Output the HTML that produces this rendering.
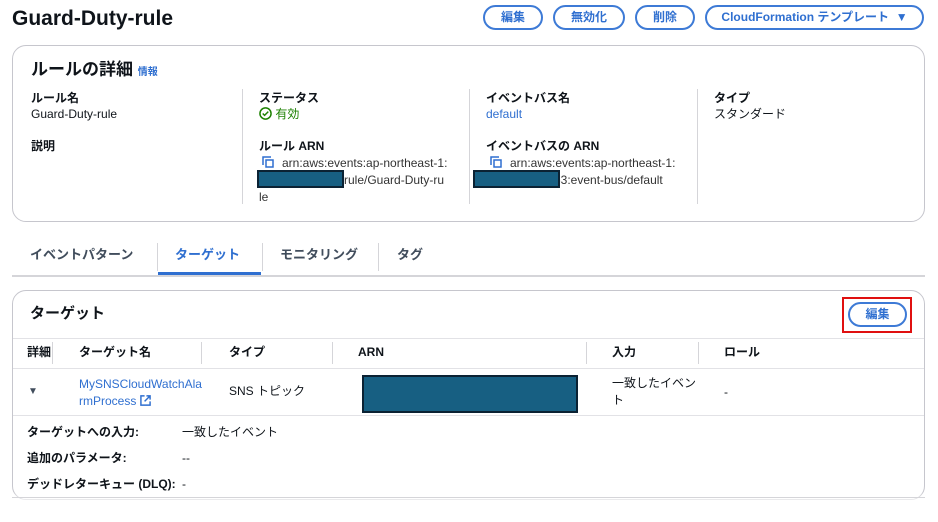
<!DOCTYPE html>
<html><head><meta charset="utf-8"><style>
*{box-sizing:border-box;margin:0;padding:0}
body{width:938px;height:522px;background:#fff;font-family:"Liberation Sans","Noto Sans CJK JP",sans-serif;color:#0f141a;position:relative;overflow:hidden;font-size:12px}
.a{position:absolute;white-space:nowrap;line-height:17px}
.b{font-weight:bold}
.btn{position:absolute;border:2px solid #3d7ad6;border-radius:14px;color:#2f6fd0;font-weight:bold;font-size:12px;text-align:center;line-height:21px;height:25px}
.card{position:absolute;border:1px solid #c6c6cd;border-radius:14px;background:#fff}
.vl{position:absolute;width:1px;background:#d5d5d9}
.hl{position:absolute;height:1px;background:#e2e2e6}
.blue{color:#2f6fd0}
.red{position:absolute;background:#175f82;border:2px solid #0b2233}
.cp{position:absolute;width:12px;height:12px}
</style></head><body>
<div class="a b" style="left:12px;top:6px;font-size:21px;line-height:26px">Guard-Duty-rule</div>
<div class="btn" style="left:483px;top:5px;width:60px">編集</div>
<div class="btn" style="left:553px;top:5px;width:72px">無効化</div>
<div class="btn" style="left:635px;top:5px;width:60px">削除</div>
<div class="btn" style="left:705px;top:5px;width:219px">CloudFormation テンプレート &nbsp;▼</div>

<div class="card" style="left:12px;top:45px;width:913px;height:177px"></div>
<div class="a b" style="left:31px;top:59px;font-size:17px;line-height:22px">ルールの詳細 <span class="blue" style="font-size:10px">情報</span></div>
<div class="vl" style="left:242px;top:89px;height:115px"></div>
<div class="vl" style="left:469px;top:89px;height:115px"></div>
<div class="vl" style="left:697px;top:89px;height:115px"></div>
<div class="a b" style="left:31px;top:90px">ルール名</div>
<div class="a" style="left:31px;top:106px">Guard-Duty-rule</div>
<div class="a b" style="left:31px;top:138px">説明</div>
<div class="a b" style="left:259px;top:90px">ステータス</div>
<div class="a" style="left:259px;top:106px;color:#1d8102"><svg width="13" height="13" viewBox="0 0 14 14" style="vertical-align:-2px"><circle cx="7" cy="7" r="6" fill="none" stroke="#1d8102" stroke-width="1.6"/><path d="M4 7l2 2 4-4" fill="none" stroke="#1d8102" stroke-width="1.6"/></svg> 有効</div>
<div class="a b" style="left:259px;top:138px">ルール ARN</div>
<svg class="cp" style="left:262px;top:156px" viewBox="0 0 12 12"><path d="M1 9V1h8" fill="none" stroke="#2f6fd0" stroke-width="1.5"/><rect x="4" y="4" width="7" height="7" fill="none" stroke="#2f6fd0" stroke-width="1.5"/></svg>
<div class="a" style="left:282px;top:155px;color:#333">arn:aws:events:ap-northeast-1:</div>
<div class="a" style="left:344px;top:172px;color:#333">rule/Guard-Duty-ru</div>
<div class="red" style="left:257px;top:170px;width:87px;height:18px"></div>
<div class="a" style="left:259px;top:189px;color:#333">le</div>
<div class="a b" style="left:486px;top:90px">イベントバス名</div>
<div class="a blue" style="left:486px;top:106px">default</div>
<div class="a b" style="left:486px;top:138px">イベントバスの ARN</div>
<svg class="cp" style="left:490px;top:156px" viewBox="0 0 12 12"><path d="M1 9V1h8" fill="none" stroke="#2f6fd0" stroke-width="1.5"/><rect x="4" y="4" width="7" height="7" fill="none" stroke="#2f6fd0" stroke-width="1.5"/></svg>
<div class="a" style="left:510px;top:155px;color:#333">arn:aws:events:ap-northeast-1:</div>
<div class="a" style="left:554px;top:172px;color:#333">63:event-bus/default</div>
<div class="red" style="left:473px;top:170px;width:87px;height:18px"></div>
<div class="a b" style="left:714px;top:90px">タイプ</div>
<div class="a" style="left:714px;top:106px">スタンダード</div>

<div class="a b" style="left:30px;top:246px;font-size:13px;color:#414d5c">イベントパターン</div>
<div class="vl" style="left:157px;top:243px;height:28px"></div>
<div class="a b blue" style="left:175px;top:246px;font-size:13px">ターゲット</div>
<div class="a" style="left:158px;top:272px;width:103px;height:3px;background:#2f6fd0"></div>
<div class="vl" style="left:262px;top:243px;height:28px"></div>
<div class="a b" style="left:280px;top:246px;font-size:13px;color:#414d5c">モニタリング</div>
<div class="vl" style="left:378px;top:243px;height:28px"></div>
<div class="a b" style="left:397px;top:246px;font-size:13px;color:#414d5c">タグ</div>
<div class="hl" style="left:12px;top:275px;width:913px;height:2px;background:#d5d5d9"></div>

<div class="card" style="left:12px;top:290px;width:913px;height:210px"></div>
<div class="a b" style="left:30px;top:304px;font-size:15px;line-height:20px">ターゲット</div>
<div class="a" style="left:842px;top:297px;width:70px;height:36px;border:2px solid #e01010"></div>
<div class="btn" style="left:848px;top:302px;width:59px">編集</div>
<div class="hl" style="left:13px;top:338px;width:911px"></div>
<div class="a b" style="left:27px;top:344px">詳細</div>
<div class="vl" style="left:52px;top:342px;height:22px"></div>
<div class="a b" style="left:79px;top:344px">ターゲット名</div>
<div class="vl" style="left:201px;top:342px;height:22px"></div>
<div class="a b" style="left:229px;top:344px">タイプ</div>
<div class="vl" style="left:332px;top:342px;height:22px"></div>
<div class="a b" style="left:358px;top:344px">ARN</div>
<div class="vl" style="left:586px;top:342px;height:22px"></div>
<div class="a b" style="left:612px;top:344px">入力</div>
<div class="vl" style="left:698px;top:342px;height:22px"></div>
<div class="a b" style="left:724px;top:344px">ロール</div>
<div class="hl" style="left:13px;top:368px;width:911px"></div>
<div class="a" style="left:28px;top:383px;font-size:10px;color:#414d5c">▼</div>
<div class="a blue" style="left:79px;top:376px">MySNSCloudWatchAla</div>
<div class="a blue" style="left:79px;top:393px">rmProcess <svg width="11" height="11" viewBox="0 0 12 12" style="vertical-align:-1px"><path d="M5 1H1v10h10V7M7 1h4v4M11 1L5 7" fill="none" stroke="#2f6fd0" stroke-width="1.6"/></svg></div>
<div class="a" style="left:229px;top:383px">SNS トピック</div>
<div class="red" style="left:362px;top:375px;width:216px;height:38px"></div>
<div class="a" style="left:612px;top:375px">一致したイベン</div>
<div class="a" style="left:612px;top:392px">ト</div>
<div class="a" style="left:724px;top:384px">-</div>
<div class="hl" style="left:13px;top:415px;width:911px"></div>
<div class="a b" style="left:27px;top:424px">ターゲットへの入力:</div>
<div class="a" style="left:182px;top:424px">一致したイベント</div>
<div class="a b" style="left:27px;top:450px">追加のパラメータ:</div>
<div class="a" style="left:182px;top:450px">--</div>
<div class="a b" style="left:27px;top:476px">デッドレターキュー (DLQ):</div>
<div class="a" style="left:182px;top:476px">-</div>
<div class="a" style="left:0;top:492px;width:938px;height:30px;background:linear-gradient(#fff0,#fff 40%)"></div>
<div class="hl" style="left:12px;top:497px;width:913px;background:#d5d5d9"></div>
</body></html>
